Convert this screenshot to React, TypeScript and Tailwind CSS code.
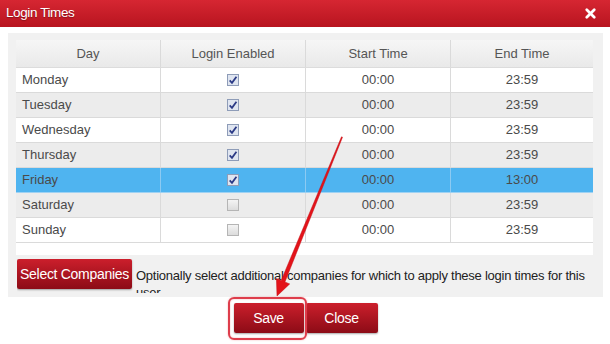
import React from 'react';
import { X } from 'lucide-react';

const days = [
  { day: 'Monday', enabled: true, start: '00:00', end: '23:59' },
  { day: 'Tuesday', enabled: true, start: '00:00', end: '23:59' },
  { day: 'Wednesday', enabled: true, start: '00:00', end: '23:59' },
  { day: 'Thursday', enabled: true, start: '00:00', end: '23:59' },
  { day: 'Friday', enabled: true, start: '00:00', end: '13:00', selected: true },
  { day: 'Saturday', enabled: false, start: '00:00', end: '23:59' },
  { day: 'Sunday', enabled: false, start: '00:00', end: '23:59' },
];

const CheckBox = ({ checked }: { checked: boolean }) =>
  checked ? (
    <span className="w-[12px] h-[12px] border border-[#8e9cb8] bg-[#dfe5f0] flex items-center justify-center">
      <svg width="10" height="10" viewBox="0 0 9 9">
        <path d="M1.5 4.8 L3.6 7 L7.6 1.6" fill="none" stroke="#2b3a86" strokeWidth="1.6" />
      </svg>
    </span>
  ) : (
    <span className="w-[12px] h-[12px] border border-[#b5b5b5] bg-linear-to-b from-[#f4f4f4] to-[#dcdcdc]" />
  );

const RedButton = ({ children, className }: { children: React.ReactNode; className?: string }) => (
  <button
    className={
      'h-[30px] bg-linear-to-b from-[#cc1f2c] to-[#8c0b16] text-white text-[14px] tracking-[-0.3px] rounded-[2px] shadow-[0_1px_2px_rgba(0,0,0,0.35)] ' +
      (className || '')
    }
  >
    {children}
  </button>
);

const App = () => {
  return (
    <div className="relative w-[610px] h-[344px] overflow-hidden bg-white font-['Liberation_Sans',Arial,sans-serif]">
      {/* title bar */}
      <div className="h-[27px] bg-linear-to-b from-[#d62632] to-[#b8141f] flex items-center justify-between pl-[6px] pr-[12px]">
        <span className="text-white text-[13.5px] tracking-[-0.4px] [text-shadow:0_1px_1px_rgba(0,0,0,0.3)]">Login Times</span>
        <X size={15} strokeWidth={4.5} color="#ffffff" />
      </div>

      {/* content panel */}
      <div className="mt-[6px] ml-[8px] w-[595px] h-[264px] bg-[#f1f1f1] pl-[8px] pt-[7px] overflow-hidden">
        <div className="w-[577px] bg-white text-[13px] text-[#4a4a4a]">
          <div className="grid grid-cols-[145px_145px_145px_1fr] h-[28px] bg-linear-to-b from-[#f6f6f6] to-[#e9e9e9] border-b border-[#dcdcdc] text-[#555]">
            <div className="flex items-center justify-center border-r border-[#dadada]">Day</div>
            <div className="flex items-center justify-center border-r border-[#dadada]">Login Enabled</div>
            <div className="flex items-center justify-center border-r border-[#dadada]">Start Time</div>
            <div className="flex items-center justify-center">End Time</div>
          </div>
          {days.map((d, i) => (
            <div
              key={d.day}
              className={
                'grid grid-cols-[145px_145px_145px_1fr] h-[25px] border-b ' +
                (d.selected
                  ? 'bg-[#4fb4f0] border-[#9fd2f3]'
                  : i % 2 === 1
                  ? 'bg-[#ececec] border-[#dadada]'
                  : 'bg-white border-[#dadada]')
              }
            >
              <div className={'flex items-center pl-[6px] border-r ' + (d.selected ? 'border-[#8ccaf2]' : 'border-[#dadada]')}>{d.day}</div>
              <div className={'flex items-center justify-center border-r ' + (d.selected ? 'border-[#8ccaf2]' : 'border-[#dadada]')}>
                <CheckBox checked={d.enabled} />
              </div>
              <div className={'flex items-center justify-center border-r ' + (d.selected ? 'border-[#8ccaf2]' : 'border-[#dadada]')}>{d.start}</div>
              <div className="flex items-center justify-center">{d.end}</div>
            </div>
          ))}
          <div className="h-[12px]" />
        </div>

        <div className="flex items-start gap-[4px] mt-[4px] ml-[1px] h-[34px] overflow-hidden">
          <RedButton className="w-[115px] shrink-0">Select Companies</RedButton>
          <p className="pt-[8px] w-[458px] text-[13px] leading-[17px] text-[#222] tracking-[-0.25px]">
            Optionally select additional companies for which to apply these login times for this user
          </p>
        </div>
      </div>

      {/* dialog buttons */}
      <div className="flex justify-center gap-[2px] mt-[6px] pl-[1px]">
        <RedButton className="w-[70px]">Save</RedButton>
        <RedButton className="w-[72px]">Close</RedButton>
      </div>

      {/* annotation: highlight box */}
      <div className="absolute left-[228px] top-[297px] w-[79px] h-[43px] border-2 border-[#de3d4b] rounded-[6px] shadow-[0_0_2px_rgba(222,61,75,0.4),inset_0_0_2px_rgba(222,61,75,0.4)] pointer-events-none" />

      {/* annotation: arrow */}
      <svg className="absolute left-0 top-0 pointer-events-none" width="610" height="344" viewBox="0 0 610 344">
        <polygon
          points="341.5,136.8 281.2,280.4 276.4,278.4 277,296 289.7,283.9 284.9,282 342.5,137.2"
          fill="#e3131a"
          stroke="#c40f15"
          strokeWidth="0.5"
        />
      </svg>
    </div>
  );
};

export default App;
